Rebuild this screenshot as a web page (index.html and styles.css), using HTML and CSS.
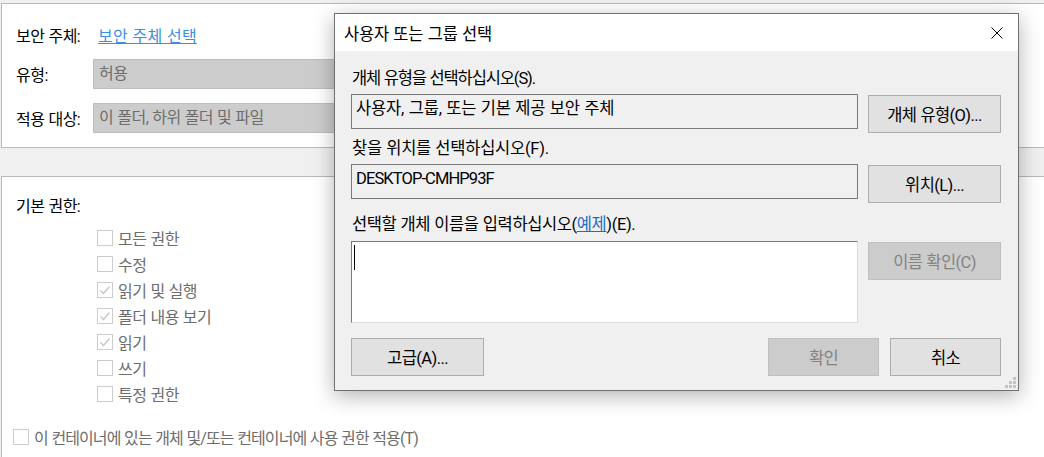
FILE: index.html
```html
<!DOCTYPE html>
<html lang="ko">
<head>
<meta charset="utf-8">
<title>사용자 또는 그룹 선택</title>
<link rel="stylesheet" href="styles.css">
</head>
<body>
<div class="page">
  <section class="panel panel-top">
    <div class="frow"><span class="lbl">보안 주체:</span><a class="link" href="#">보안 주체 선택</a></div>
    <div class="frow r2"><span class="lbl">유형:</span><div class="field">허용</div></div>
    <div class="frow r3"><span class="lbl">적용 대상:</span><div class="field">이 폴더, 하위 폴더 및 파일</div></div>
  </section>

  <section class="panel panel-perm">
    <div class="perm-title">기본 권한:</div>
    <ul class="checks">
      <li><span class="cb"></span>모든 권한</li>
      <li><span class="cb"></span>수정</li>
      <li><span class="cb"><svg viewBox="0 0 14 14" width="14" height="14"><path d="M2.5 7.5 L5.5 10.5 L11.5 3.5" fill="none" stroke="#c3c3c3" stroke-width="1.2"/></svg></span>읽기 및 실행</li>
      <li><span class="cb"><svg viewBox="0 0 14 14" width="14" height="14"><path d="M2.5 7.5 L5.5 10.5 L11.5 3.5" fill="none" stroke="#c3c3c3" stroke-width="1.2"/></svg></span>폴더 내용 보기</li>
      <li><span class="cb"><svg viewBox="0 0 14 14" width="14" height="14"><path d="M2.5 7.5 L5.5 10.5 L11.5 3.5" fill="none" stroke="#c3c3c3" stroke-width="1.2"/></svg></span>읽기</li>
      <li><span class="cb"></span>쓰기</li>
      <li><span class="cb"></span>특정 권한</li>
    </ul>
    <div class="apply"><span class="cb"></span><span class="apply-text">이 컨테이너에 있는 개체 및/또는 컨테이너에 사용 권한 적용(T)</span></div>
  </section>

  <div class="dialog">
    <div class="titlebar">
      <span class="title">사용자 또는 그룹 선택</span>
      <svg class="close" viewBox="0 0 12 12" width="12" height="12"><path d="M0.5 0.5 L11.5 11.5 M11.5 0.5 L0.5 11.5" stroke="#000" stroke-width="1" fill="none"/></svg>
    </div>
    <div class="dlg-body">
      <div class="dlbl l1">개체 유형을 선택하십시오(S).</div>
      <div class="drow">
        <div class="tbox t1">사용자, 그룹, 또는 기본 제공 보안 주체</div>
        <button class="btn">개체 유형(O)...</button>
      </div>
      <div class="dlbl l2">찾을 위치를 선택하십시오(F).</div>
      <div class="drow">
        <div class="tbox latin">DESKTOP-CMHP93F</div>
        <button class="btn">위치(L)...</button>
      </div>
      <div class="dlbl l3">선택할 개체 이름을 입력하십시오(<a class="link2" href="#">예제</a>)(E).</div>
      <div class="drow">
        <div class="tarea"><div class="caret"></div></div>
        <button class="btn disabled">이름 확인(C)</button>
      </div>
      <div class="brow">
        <button class="btn">고급(A)...</button>
        <div class="spacer"></div>
        <button class="btn small disabled">확인</button>
        <button class="btn small">취소</button>
      </div>
      <svg class="grip" viewBox="0 0 11 11" width="11" height="11">
        <rect x="8" y="0" width="3" height="3" fill="#c4c4c4"/>
        <rect x="4" y="4" width="3" height="3" fill="#c4c4c4"/>
        <rect x="8" y="4" width="3" height="3" fill="#c4c4c4"/>
        <rect x="0" y="8" width="3" height="3" fill="#c4c4c4"/>
        <rect x="4" y="8" width="3" height="3" fill="#c4c4c4"/>
        <rect x="8" y="8" width="3" height="3" fill="#c4c4c4"/>
      </svg>
    </div>
  </div>
</div>
</body>
</html>
```
FILE: styles.css
```css
html, body {
  margin: 0;
  padding: 0;
}
body {
  background: #f0f0f0;
  font-family: Roboto, "Noto Sans CJK KR", sans-serif;
  font-size: 16px;
  letter-spacing: -0.5px;
  word-spacing: 0.5px;
  color: #000;
  width: 1044px;
  height: 457px;
  overflow: hidden;
}
.page {
  position: relative;
  height: 457px;
  padding-top: 3px;
  box-sizing: border-box;
}
.panel {
  background: #fff;
  border: 1px solid #b9b9b9;
  border-right: none;
  margin-left: 1px;
  box-sizing: border-box;
}
.panel-top {
  height: 145px;
  padding: 16px 0 0 14px;
}
.frow {
  display: flex;
  align-items: center;
  height: 30px;
}
.r2 { margin-top: 9px; }
.r3 { margin-top: 14px; }
.lbl {
  width: 77px;
  flex: none;
}
.link {
  margin-left: 5px;
  color: #3a8ee6;
  letter-spacing: 0.2px;
  text-decoration: underline;
  text-underline-offset: 1px;
}
.field {
  width: 520px;
  height: 30px;
  box-sizing: border-box;
  background: #cccccc;
  border: 1px solid #bdbdbd;
  color: #6d6d6d;
  padding-left: 5px;
  line-height: 28px;
}
.panel-perm {
  margin-top: 28px;
  height: 290px;
  padding: 20px 0 0 14px;
  border-bottom: none;
}
.perm-title {
  line-height: 20px;
}
.checks {
  list-style: none;
  margin: 8px 0 0;
  padding: 0 0 0 81px;
}
.checks li {
  display: flex;
  align-items: center;
  gap: 5px;
  height: 26px;
  color: #6d6d6d;
}
.cb {
  width: 16px;
  height: 16px;
  box-sizing: border-box;
  border: 1px solid #cccccc;
  background: #fff;
  flex: none;
  display: flex;
}
.apply {
  display: flex;
  align-items: center;
  gap: 5px;
  height: 26px;
  margin: 17px 0 0 -3px;
  color: #6d6d6d;
}
.apply-text {
  letter-spacing: -0.9px;
}

/* dialog */
.dialog {
  position: absolute;
  left: 334px;
  top: 13px;
  width: 685px;
  height: 378px;
  box-sizing: border-box;
  border: 1px solid #707070;
  background: #f0f0f0;
  box-shadow: 0 5px 20px rgba(0, 0, 0, 0.3);
  display: flex;
  flex-direction: column;
  font-size: 16.5px;
  letter-spacing: -0.6px;
}
.titlebar {
  height: 37px;
  flex: none;
  background: #fff;
  display: flex;
  align-items: center;
  justify-content: space-between;
  padding: 0 15px 0 9px;
}
.title {
  letter-spacing: -0.2px;
}
.close {
  display: block;
}
.dlg-body {
  position: relative;
  flex: 1;
  padding: 0 17px 0 16px;
}
.dlbl {
  line-height: 20px;
  padding-left: 1px;
}
.l1 { margin-top: 18px; letter-spacing: -1.1px; }
.l2 { margin-top: 6px; letter-spacing: -0.25px; }
.l3 { margin-top: 12px; letter-spacing: -0.4px; }
.link2 {
  color: #1a6fc4;
  text-decoration: underline;
  text-underline-offset: 1px;
}
.drow {
  display: flex;
  align-items: flex-start;
  gap: 10px;
  margin-top: 5px;
}
.tbox {
  flex: 1;
  height: 35px;
  box-sizing: border-box;
  border: 1px solid #7a7a7a;
  padding: 4px 0 0 4px;
  line-height: 20px;
}
.tbox.t1 {
  letter-spacing: -0.15px;
}
.tbox.latin {
  letter-spacing: -0.9px;
}
.tarea {
  flex: 1;
  height: 82px;
  box-sizing: border-box;
  background: #fff;
  border: 1px solid #dcdcdc;
  border-top-color: #7a7a7a;
  border-left-color: #7a7a7a;
  padding: 3px 0 0 2px;
}
.l3 + .drow { margin-top: 6px; }
.caret {
  width: 1px;
  height: 25px;
  background: #000;
}
.btn {
  width: 133px;
  height: 38px;
  margin-top: 1px;
  box-sizing: border-box;
  background: #e1e1e1;
  border: 1px solid #adadad;
  font: inherit;
  letter-spacing: inherit;
  word-spacing: inherit;
  color: #000;
  padding: 0;
  flex: none;
}
.btn.disabled {
  background: #cccccc;
  border-color: #bfbfbf;
  color: #838383;
}
.btn.small {
  width: 111px;
}
.brow {
  display: flex;
  gap: 11px;
  margin-top: 14px;
}
.spacer {
  flex: 1;
}
.grip {
  position: absolute;
  right: 2px;
  bottom: 2px;
  display: block;
}
```
